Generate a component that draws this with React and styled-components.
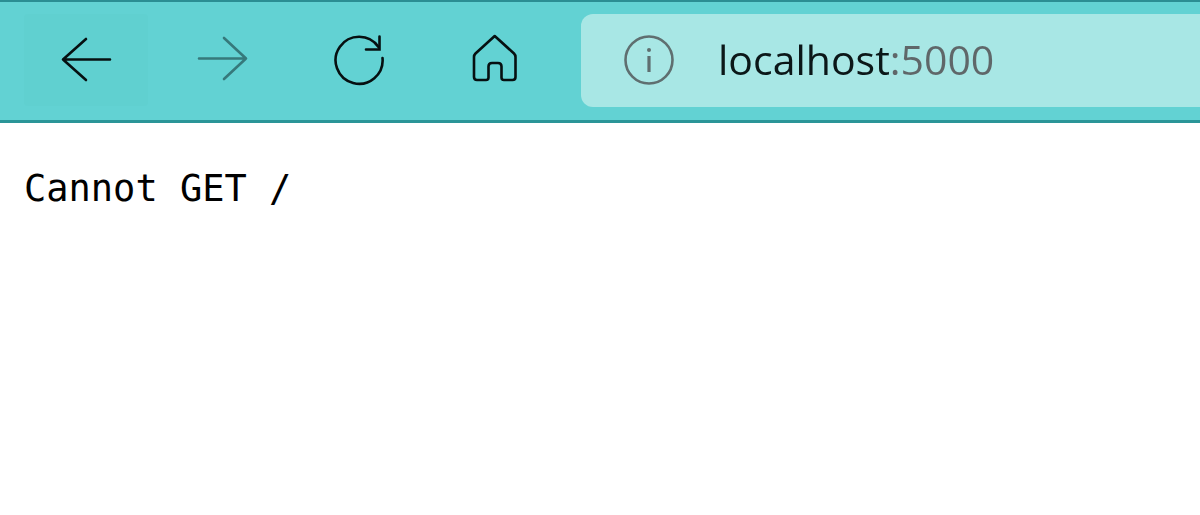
import React from "react";
import styled, { createGlobalStyle } from "styled-components";

const GlobalStyle = createGlobalStyle`
  *, *::before, *::after { box-sizing: border-box; }
  body { margin: 0; background: #ffffff; }
`;

const Toolbar = styled.header`
  display: flex;
  align-items: flex-start;
  gap: 25px;
  padding: 12px 0 13px 24px;
  background: #62d2d3;
  border-top: 2px solid #2b8e93;
  border-bottom: 3px solid #2a9598;
`;

const Navigation = styled.nav`
  display: flex;
  gap: 12px;
`;

const NavButton = styled.button`
  display: flex;
  align-items: center;
  justify-content: center;
  width: 124px;
  height: 92px;
  padding: 0 0 2px;
  border: 0;
  border-radius: 4px;
  color: #061011;
  background: ${({ $active }) => ($active ? "#60d0d0" : "transparent")};

  &:disabled { color: #36797b; }
`;

const Icon = styled.svg`
  display: block;
  flex: none;
  width: 56px;
  height: 56px;
  fill: none;
  stroke: currentColor;
  stroke-width: 2.6;
  stroke-linecap: round;
  stroke-linejoin: round;
`;

const AddressBar = styled.form`
  display: flex;
  flex: 1;
  align-items: center;
  gap: 41px;
  min-width: 0;
  height: 93px;
  padding: 0 0 1px 40px;
  border-radius: 12px 0 0 12px;
  background: #a8e7e5;
`;

const InfoButton = styled.button`
  flex: none;
  padding: 0;
  border: 0;
  color: #5f6f70;
  background: none;
`;

const AddressInput = styled.input`
  flex: 1;
  min-width: 0;
  height: 64px;
  padding: 0 0 2px;
  border: 0;
  outline: 0;
  font: 400 41px/60px "Open Sans", "Noto Sans", sans-serif;
  color: #0b1718;
  background: linear-gradient(to right, #0b1718 171px, #5f6769 171px);
  background-clip: text;
  -webkit-background-clip: text;
  -webkit-text-fill-color: transparent;
`;

const Page = styled.main`
  padding: 42px 24px;
`;

const Message = styled.pre`
  margin: 0;
  font: 400 37px/48px "DejaVu Sans Mono", monospace;
  color: #000000;
`;

export default function App() {
  return (
    <>
      <GlobalStyle />
      <Toolbar>
        <Navigation aria-label="Browser">
          <NavButton type="button" aria-label="Back" $active>
            <Icon viewBox="0 0 56 56">
              <path d="M52 28.500H5M28 8L5 28.500L28 49" />
            </Icon>
          </NavButton>
          <NavButton type="button" aria-label="Forward" disabled>
            <Icon viewBox="0 0 56 56">
              <path d="M5 27.500H52M30 7L52 27.500L30 48" />
            </Icon>
          </NavButton>
          <NavButton type="button" aria-label="Refresh">
            <Icon viewBox="0 0 56 56">
              <path d="M52.500 27A23.500 23.500 0 1 1 48.500 16" />
              <path strokeLinejoin="miter" d="M49.500 5.500V18.500H36" />
            </Icon>
          </NavButton>
          <NavButton type="button" aria-label="Home">
            <Icon viewBox="0 0 56 56">
              <path d="M28.700 5L48 22.500Q49.500 24 49.500 26V46Q49.500 49 46.500 49H38Q35.500 49 35.500 46.500V35.500Q35.500 32 32 32H26Q22.500 32 22.500 35.500V46.500Q22.500 49 20 49H11Q8 49 8 46V26Q8 24 9.500 22.500Z" />
            </Icon>
          </NavButton>
        </Navigation>
        <AddressBar onSubmit={(event) => event.preventDefault()}>
          <InfoButton type="button" aria-label="Site information">
            <Icon viewBox="0 0 56 56">
              <circle cx="28" cy="28" r="23.500" />
              <path style={{ strokeWidth: 3.2, strokeLinecap: "butt" }} d="M28 24V40" />
              <circle cx="28" cy="18" r="2" fill="currentColor" stroke="none" />
            </Icon>
          </InfoButton>
          <AddressInput
            type="text"
            aria-label="Address"
            defaultValue="localhost:5000"
            spellCheck={false}
          />
        </AddressBar>
      </Toolbar>
      <Page>
        <Message>Cannot GET /</Message>
      </Page>
    </>
  );
}
